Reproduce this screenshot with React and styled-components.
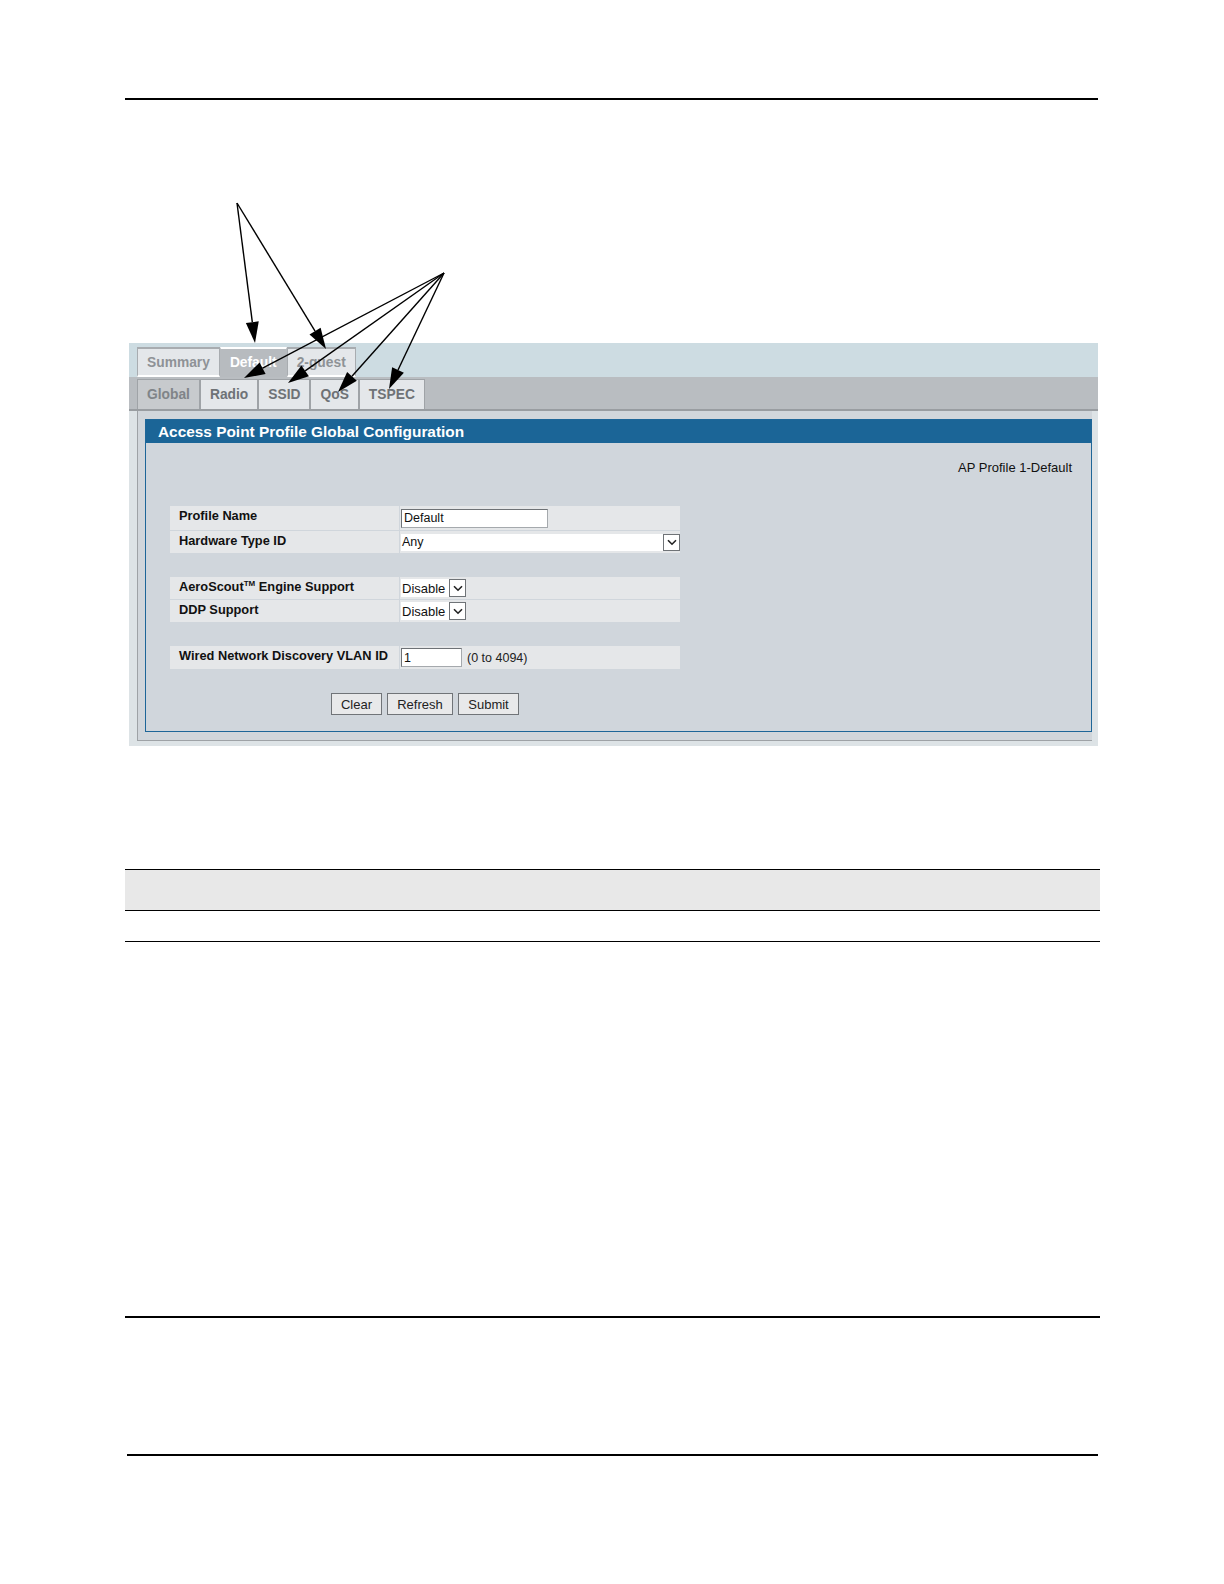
import React from 'react';
import styled, { createGlobalStyle } from 'styled-components';

const GlobalStyle = createGlobalStyle`
  html, body {
    margin: 0;
    padding: 0;
    background: #ffffff;
    overflow: hidden;
  }
  body {
    font-family: "Liberation Sans", Arial, sans-serif;
  }
`;

const topTabs = [
  { label: 'Summary' },
  { label: 'Default', active: true },
  { label: '2-guest' }
];

const subTabs = [
  { label: 'Global', active: true },
  { label: 'Radio' },
  { label: 'SSID' },
  { label: 'QoS' },
  { label: 'TSPEC' }
];

// callout arrows drawn over the screenshot: [fromX, fromY, toX, toY]
const arrows = [
  [237, 203, 255, 343],
  [237, 203, 326, 349],
  [444, 273, 244, 378],
  [444, 273, 288, 383],
  [444, 273, 338, 392],
  [444, 273, 389, 389]
];

const Arrow = ({ from, to }) => {
  const [x1, y1] = from;
  const [x2, y2] = to;
  const dx = x2 - x1;
  const dy = y2 - y1;
  const len = Math.sqrt(dx * dx + dy * dy);
  const ux = dx / len;
  const uy = dy / len;
  const head = 21;
  const half = 6.5;
  const bx = x2 - ux * head;
  const by = y2 - uy * head;
  const pts = [
    `${x2},${y2}`,
    `${bx - uy * half},${by + ux * half}`,
    `${bx + uy * half},${by - ux * half}`
  ].join(' ');
  return (
    <g>
      <line x1={x1} y1={y1} x2={bx} y2={by} stroke="#000" strokeWidth="1.4" />
      <polygon points={pts} fill="#000" />
    </g>
  );
};

const Chevron = () => (
  <svg width="10" height="7" viewBox="0 0 10 7">
    <path d="M1 1.2 L5 5.2 L9 1.2" fill="none" stroke="#222" strokeWidth="1.6" />
  </svg>
);

const App = () => {
  return (
    <Page>
      <GlobalStyle />
      <TopRule />

      <Panel>
        <TopTabBar>
          {topTabs.map(t => (
            <TopTab key={t.label} $active={t.active}>{t.label}</TopTab>
          ))}
        </TopTabBar>
        <SubTabBar>
          {subTabs.map(t => (
            <SubTab key={t.label} $active={t.active}>{t.label}</SubTab>
          ))}
        </SubTabBar>
        <Body>
          <Frame>
            <Section>
              <SectionHeader>Access Point Profile Global Configuration</SectionHeader>
              <SectionBody>
                <ProfileCaption>AP Profile 1-Default</ProfileCaption>

                <FormTable>
                  <Group>
                    <Row $h={24}>
                      <Label>Profile Name</Label>
                      <Value>
                        <TextBox $width={147} defaultValue="Default" />
                      </Value>
                    </Row>
                    <Row $h={22}>
                      <Label>Hardware Type ID</Label>
                      <Value>
                        <SelectBox $width={279}>
                          <span>Any</span>
                          <ArrowBox><Chevron /></ArrowBox>
                        </SelectBox>
                      </Value>
                    </Row>
                  </Group>

                  <Group>
                    <Row $h={22}>
                      <Label>AeroScout<sup>TM</sup> Engine Support</Label>
                      <Value>
                        <SelectBox $width={65} $tight>
                          <span>Disable</span>
                          <ArrowBox><Chevron /></ArrowBox>
                        </SelectBox>
                      </Value>
                    </Row>
                    <Row $h={22}>
                      <Label>DDP Support</Label>
                      <Value>
                        <SelectBox $width={65} $tight>
                          <span>Disable</span>
                          <ArrowBox><Chevron /></ArrowBox>
                        </SelectBox>
                      </Value>
                    </Row>
                  </Group>

                  <Group>
                    <Row $h={23}>
                      <Label>Wired Network Discovery VLAN ID</Label>
                      <Value>
                        <TextBox $width={61} defaultValue="1" />
                        <Hint>(0 to 4094)</Hint>
                      </Value>
                    </Row>
                  </Group>
                </FormTable>

                <ButtonBar>
                  <FormButton $width={51}>Clear</FormButton>
                  <FormButton $width={66}>Refresh</FormButton>
                  <FormButton $width={61}>Submit</FormButton>
                </ButtonBar>
              </SectionBody>
            </Section>
          </Frame>
        </Body>
      </Panel>

      <DocTable>
        <DocHead />
        <DocRow />
      </DocTable>

      <SectionRule />
      <FooterRule />

      <Overlay width="1224" height="1584" viewBox="0 0 1224 1584">
        {arrows.map((a, i) => (
          <Arrow key={i} from={[a[0], a[1]]} to={[a[2], a[3]]} />
        ))}
      </Overlay>
    </Page>
  );
};

const Page = styled.div`
  position: relative;
  width: 1224px;
  height: 1584px;
  overflow: hidden;
  box-sizing: border-box;
  padding: 98px 124px 0 125px;
  display: flex;
  flex-direction: column;
`;

const TopRule = styled.div`
  height: 2px;
  width: 973px;
  background: #000;
  margin-bottom: 243px;
`;

const Panel = styled.div`
  width: 969px;
  margin-left: 4px;
  display: flex;
  flex-direction: column;
  background: #dde3e6;
`;

const TopTabBar = styled.div`
  height: 34px;
  box-sizing: border-box;
  padding: 4px 0 0 8px;
  background: #cddce2;
  display: flex;
  align-items: flex-end;
`;

const TopTab = styled.div`
  height: 30px;
  box-sizing: border-box;
  padding: 0 9px;
  display: flex;
  align-items: center;
  font-size: 13.8px;
  font-weight: bold;
  color: ${p => (p.$active ? '#ffffff' : '#8e9296')};
  background: ${p => (p.$active ? '#b7bbbf' : '#e4e7ea')};
  border: 1px solid ${p => (p.$active ? '#b7bbbf' : '#a8acb0')};
  border-top: 2px solid ${p => (p.$active ? '#ffffff' : '#a8acb0')};
  border-bottom: 2px solid ${p => (p.$active ? '#b7bbbf' : '#ffffff')};
`;

const SubTabBar = styled.div`
  height: 34px;
  box-sizing: border-box;
  padding: 4px 0 0 8px;
  background: #b9bdc1;
  border-bottom: 2px solid #999da1;
  display: flex;
  align-items: flex-end;
`;

const SubTab = styled.div`
  height: 30px;
  box-sizing: border-box;
  padding: 0 9px;
  display: flex;
  align-items: center;
  font-size: 13.8px;
  font-weight: bold;
  color: ${p => (p.$active ? '#808488' : '#6e7276')};
  background: ${p => (p.$active ? '#c7cacd' : '#e4e7ea')};
  border: 1px solid #9fa3a7;
  border-bottom: none;
`;

const Body = styled.div`
  padding: 0 6px 5px 8px;
`;

const Frame = styled.div`
  background: #d1d6db;
  border-left: 1px solid #9ea2a6;
  border-bottom: 1px solid #9ea2a6;
  padding: 8px 0 8px 7px;
`;

const Section = styled.div`
  border: 1px solid #1e6698;
  background: #d0d6dc;
`;

const SectionHeader = styled.div`
  height: 23px;
  background: #1b6597;
  color: #ffffff;
  font-size: 15.4px;
  font-weight: bold;
  line-height: 23px;
  padding-left: 12px;
`;

const SectionBody = styled.div`
  padding: 17px 19px 16px 24px;
  display: flex;
  flex-direction: column;
`;

const ProfileCaption = styled.div`
  align-self: flex-end;
  font-size: 13px;
  color: #111;
  line-height: 16px;
  margin-bottom: 30px;
`;

const FormTable = styled.div`
  width: 510px;
  display: flex;
  flex-direction: column;
  gap: 24px;
`;

const Group = styled.div`
  display: flex;
  flex-direction: column;
  gap: 1px;
`;

const Row = styled.div`
  display: grid;
  grid-template-columns: 229px 1fr;
  gap: 1px;
  height: ${p => p.$h}px;
`;

const Label = styled.div`
  background: #e5e7e9;
  padding: 2px 0 0 9px;
  font-size: 12.8px;
  font-weight: bold;
  color: #111;
  white-space: nowrap;

  sup {
    font-size: 8px;
    line-height: 0;
    vertical-align: 5px;
  }
`;

const Value = styled.div`
  background: #e5e7e9;
  display: flex;
  align-items: center;
  padding-left: 1px;
  font-size: 12px;
  color: #111;
`;

const TextBox = styled.input`
  width: ${p => p.$width}px;
  height: 19px;
  box-sizing: border-box;
  border: 1px solid #a5a9ad;
  border-top-color: #6e7276;
  border-left-color: #6e7276;
  background: #fff;
  font-family: "Liberation Sans", Arial, sans-serif;
  font-size: 12.5px;
  color: #111;
  padding: 0 2px;
  outline: none;
`;

const SelectBox = styled.div`
  width: ${p => p.$width}px;
  height: ${p => (p.$tight ? '18px' : '17px')};
  box-sizing: border-box;
  background: #fff;
  display: flex;
  align-items: center;
  justify-content: space-between;
  padding-left: 1px;
  font-size: ${p => (p.$tight ? '13px' : '12.5px')};
  color: #111;
`;

const ArrowBox = styled.span`
  width: 17px;
  height: 100%;
  box-sizing: border-box;
  border: 1px solid #6f7377;
  background: #fff;
  display: flex;
  align-items: center;
  justify-content: center;
`;

const Hint = styled.span`
  margin-left: 5px;
  font-size: 12.5px;
  color: #222;
`;

const ButtonBar = styled.div`
  width: 510px;
  display: flex;
  justify-content: center;
  gap: 5px;
  margin-top: 24px;
`;

const FormButton = styled.button`
  width: ${p => p.$width}px;
  height: 22px;
  box-sizing: border-box;
  border: 1px solid #707478;
  background: #e8e9ea;
  font-family: "Liberation Sans", Arial, sans-serif;
  font-size: 13px;
  color: #222;
  padding: 0;
`;

const DocTable = styled.div`
  width: 975px;
  margin-top: 123px;
  display: flex;
  flex-direction: column;
`;

const DocHead = styled.div`
  height: 40px;
  background: #e8e8e8;
  border-top: 1px solid #000;
  border-bottom: 1px solid #000;
`;

const DocRow = styled.div`
  height: 30px;
  border-bottom: 1px solid #000;
`;

const SectionRule = styled.div`
  width: 975px;
  height: 2px;
  background: #000;
  margin-top: 374px;
`;

const FooterRule = styled.div`
  width: 971px;
  height: 2px;
  background: #000;
  margin: 136px 0 0 2px;
`;

const Overlay = styled.svg`
  position: absolute;
  left: 0;
  top: 0;
  pointer-events: none;
`;

export default App;
